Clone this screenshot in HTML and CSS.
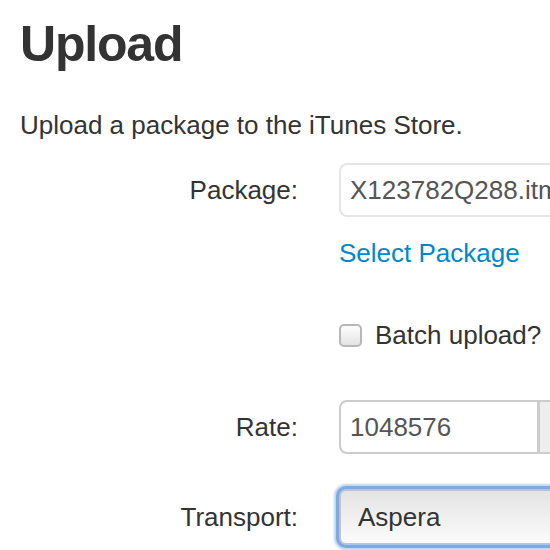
FILE: index.html
```html
<!DOCTYPE html>
<html>
<head>
<meta charset="utf-8">
<link rel="stylesheet" href="styles.css">
</head>
<body>
<div class="page">
  <h1 class="title">Upload</h1>
  <p class="intro">Upload a package to the iTunes Store.</p>
  <form class="form">
    <div class="row row-package">
      <label class="label">Package:</label>
      <div class="control">
        <input class="field field-light" type="text" value="X123782Q288.itmsp" readonly>
      </div>
    </div>
    <div class="row row-link">
      <div class="label"></div>
      <div class="control"><a class="link" href="#">Select Package</a></div>
    </div>
    <div class="row row-check">
      <div class="label"></div>
      <div class="control check-line">
        <span class="checkbox"></span>
        <span class="check-text">Batch upload?</span>
      </div>
    </div>
    <div class="row row-rate">
      <label class="label">Rate:</label>
      <div class="control group">
        <input class="field field-rate" type="text" value="1048576">
        <span class="addon"></span>
      </div>
    </div>
    <div class="row row-transport">
      <label class="label">Transport:</label>
      <div class="control">
        <div class="select">Aspera</div>
      </div>
    </div>
  </form>
</div>
</body>
</html>
```
FILE: styles.css
```css
html, body {
  margin: 0;
  padding: 0;
  overflow: hidden;
  background: #fff;
}
body {
  font-family: "Liberation Sans", Arial, Helvetica, sans-serif;
  color: #333;
  width: 550px;
  height: 550px;
}
.page {
  padding: 17px 0 0 20px;
}
.title {
  margin: 0;
  font-size: 50px;
  line-height: 55px;
  font-weight: bold;
  letter-spacing: -1.2px;
  color: #333;
}
.intro {
  margin: 35px 0 0 0;
  font-size: 26px;
  line-height: 36px;
}
.form {
  margin: 20px 0 0 0;
}
.row {
  display: flex;
  align-items: center;
  font-size: 26px;
  line-height: 36px;
}
.label {
  width: 278px;
  flex: none;
  text-align: right;
  margin-right: 41px;
  color: #333;
}
.control {
  flex: none;
}
.field {
  box-sizing: border-box;
  height: 54px;
  font-family: inherit;
  font-size: 26px;
  color: #555;
  padding: 0 9px;
  border: 2px solid #ccc;
  border-radius: 8px;
  background: #fff;
  outline: none;
}
.field-light {
  width: 320px;
  border-color: #e6e6e6;
}
.row-link {
  margin-top: 18px;
}
.link {
  color: #0088cc;
  text-decoration: none;
}
.row-check {
  margin-top: 46px;
}
.check-line {
  display: flex;
  align-items: center;
}
.checkbox {
  box-sizing: border-box;
  width: 23px;
  height: 23px;
  border: 2px solid #b8b8b8;
  border-radius: 5px;
  background: linear-gradient(#fdfdfd, #e4e4e4);
  margin-right: 13px;
}
.row-rate {
  margin-top: 47px;
}
.group {
  display: flex;
}
.field-rate {
  width: 200px;
  border-radius: 8px 0 0 8px;
}
.addon {
  box-sizing: border-box;
  height: 54px;
  width: 120px;
  border: 2px solid #ccc;
  margin-left: -1px;
  background: #eee;
}
.row-transport {
  margin-top: 36px;
}
.select {
  box-sizing: border-box;
  width: 320px;
  height: 54px;
  margin-left: 1px;
  padding: 0 17px;
  display: flex;
  align-items: center;
  color: #333;
  border: 1px solid #c4c4c4;
  border-radius: 6px;
  background: linear-gradient(#e4e4e4, #fbfbfb);
  box-shadow: 0 0 0 1px #a9c6ea, 0 0 0 4px #7eaae2, 0 0 2px 6px rgba(126, 170, 226, 0.5);
}
```
